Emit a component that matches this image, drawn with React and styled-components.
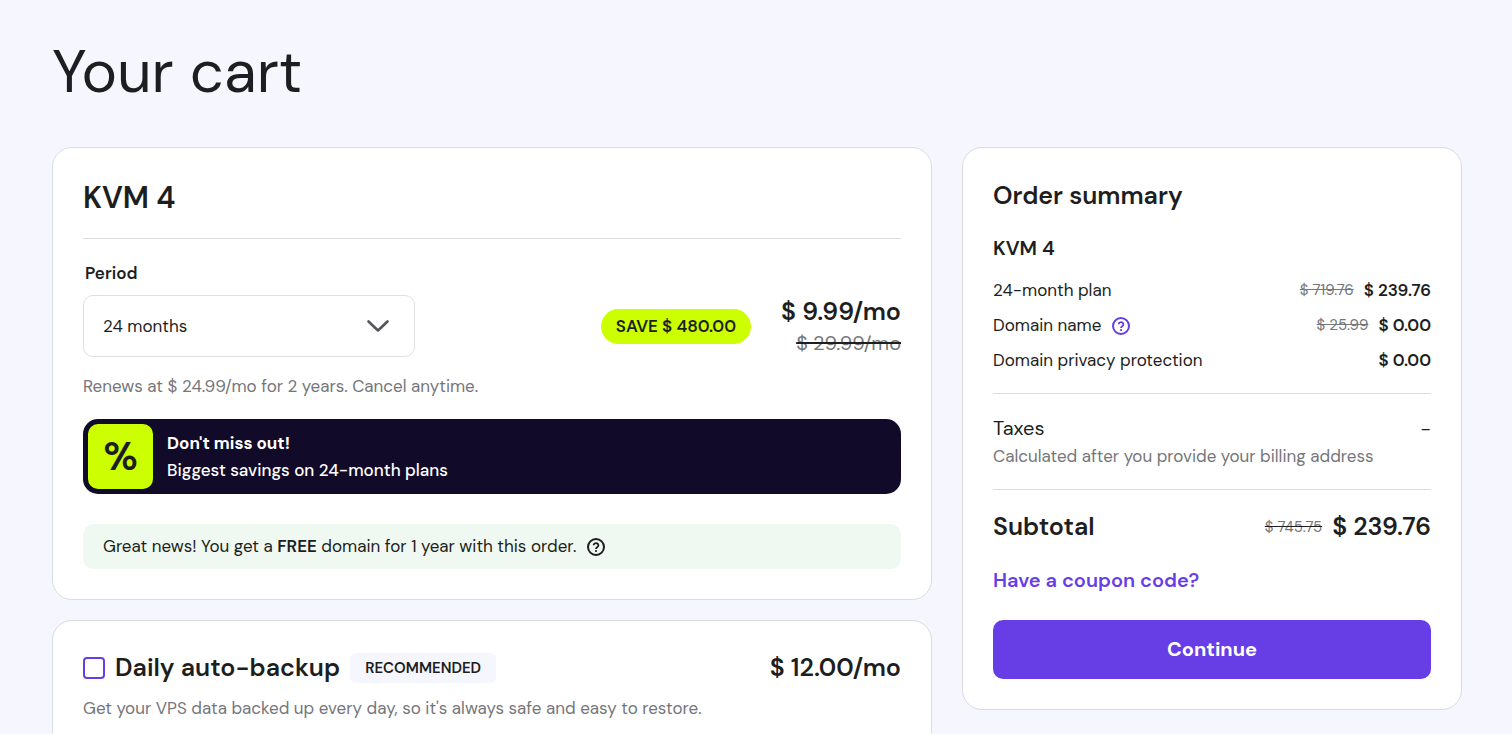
import { useState } from "react"
import styled, { createGlobalStyle } from "styled-components"

const summaryItems = [
    {name: "24-month plan", old: "$ 719.76", price: "$ 239.76"},
    {name: "Domain name", old: "$ 25.99", price: "$ 0.00", help: true},
    {name: "Domain privacy protection", price: "$ 0.00"},
]

const HelpButton = ({label, purple}) => (
    <Help type="button" aria-label={label} $purple={purple}>
        <svg width="20" height="20" viewBox="0 0 20 20" fill="none" stroke="currentColor" strokeWidth="2" aria-hidden="true">
            <circle cx="10" cy="10" r="8" />
            <path d="M7.6 8.3a2.4 2.2 0 1 1 3.8 1.8c-.8.6-1.4.9-1.4 2" strokeWidth="1.8" />
            <circle cx="10" cy="14" r="1.1" fill="currentColor" stroke="none" />
        </svg>
    </Help>
)

const App = () => {
    const [period, setPeriod] = useState("24")
    const [backup, setBackup] = useState(false)
    return (
        <>
            <GlobalStyle />
            <Page>
                <PageTitle>Your cart</PageTitle>
                <Columns>
                    <Items>
                        <Card>
                            <PlanName>KVM 4</PlanName>
                            <Label htmlFor="period">Period</Label>
                            <PeriodRow>
                                <SelectBox>
                                    <Select id="period" value={period} onChange={(e)=> setPeriod(e.target.value)}>
                                        <option value="1">1 month</option>
                                        <option value="12">12 months</option>
                                        <option value="24">24 months</option>
                                    </Select>
                                    <Chevron viewBox="0 0 24 14" aria-hidden="true">
                                        <path d="M2.5 2.5l9.5 9 9.5-9" />
                                    </Chevron>
                                </SelectBox>
                                <Save>SAVE $ 480.00</Save>
                                <Prices>
                                    <Price>$ 9.99/mo</Price>
                                    <OldPrice $size="20px" $line="#1d1e20" $height="28px">$ 29.99/mo</OldPrice>
                                </Prices>
                            </PeriodRow>
                            <Renewal>Renews at $ 24.99/mo for 2 years. Cancel anytime.</Renewal>
                            <Banner>
                                <Percent>%</Percent>
                                <div>
                                    <BannerText $bold>Don't miss out!</BannerText>
                                    <BannerText>Biggest savings on 24-month plans</BannerText>
                                </div>
                            </Banner>
                            <Notice>
                                <span>Great news! You get a <b>FREE</b> domain for 1 year with this order.</span>
                                <HelpButton label="About the free domain" />
                            </Notice>
                        </Card>
                        <Card>
                            <AddonRow>
                                <Checkbox type="checkbox" id="backup" checked={backup} onChange={()=> setBackup(!backup)} />
                                <AddonName htmlFor="backup">Daily auto-backup</AddonName>
                                <Tag>RECOMMENDED</Tag>
                                <AddonPrice>$ 12.00/mo</AddonPrice>
                            </AddonRow>
                            <Muted>Get your VPS data backed up every day, so it's always safe and easy to restore.</Muted>
                        </Card>
                    </Items>
                    <Card as="aside">
                        <SummaryTitle>Order summary</SummaryTitle>
                        <SummaryPlan>KVM 4</SummaryPlan>
                        <Lines>
                            {summaryItems.map((item)=> (
                                <Line key={item.name}>
                                    <span>{item.name}</span>
                                    {item.help && <HelpButton purple label="About the domain name" />}
                                    <Amount>
                                        {item.old && <OldPrice>{item.old}</OldPrice>}
                                        <b>{item.price}</b>
                                    </Amount>
                                </Line>
                            ))}
                        </Lines>
                        <Taxes>
                            <TaxRow><span>Taxes</span><span>-</span></TaxRow>
                            <Muted>Calculated after you provide your billing address</Muted>
                        </Taxes>
                        <Subtotal>
                            <span>Subtotal</span>
                            <Amount>
                                <OldPrice $line="#1d1e20">$ 745.75</OldPrice>
                                <span>$ 239.76</span>
                            </Amount>
                        </Subtotal>
                        <Coupon href="#coupon">Have a coupon code?</Coupon>
                        <Continue type="button">Continue</Continue>
                    </Card>
                </Columns>
            </Page>
        </>
    )
}

const GlobalStyle = createGlobalStyle`
*{
box-sizing: border-box;
}
body{
margin: 0;
background: #f6f6ff;
color: #1d1e20;
font-family: "DM Sans", Inter, sans-serif;
font-size: 17px;
line-height: 25px;
}
h1, h2, h3, p{
margin: 0;
}
b{
font-weight: 600;
}
button, select{
font: inherit;
color: inherit;
}
`

const Page = styled.main`
padding: 32px 50px 50px 52px;
`
const PageTitle = styled.h1`
font-size: 60px;
font-weight: 400;
line-height: 80px;
margin-bottom: 35px;
`
const Columns = styled.div`
display: grid;
grid-template-columns: minmax(0, 1fr) 500px;
align-items: start;
gap: 30px;
`
const Items = styled.div`
display: flex;
flex-direction: column;
gap: 20px;
`
const Card = styled.section`
background: #fff;
border: 1px solid #dadce0;
border-radius: 20px;
padding: 30px;
`
const PlanName = styled.h2`
font-size: 30px;
font-weight: 600;
line-height: 40px;
padding-bottom: 20px;
margin-bottom: 20px;
border-bottom: 1px solid #dadce0;
`
const Label = styled.label`
display: block;
padding-left: 2px;
margin-bottom: 8px;
font-weight: 600;
line-height: 28px;
`
const PeriodRow = styled.div`
display: flex;
align-items: center;
`
const SelectBox = styled.div`
display: grid;
align-items: center;
width: 332px;
margin-right: auto;
`
const Select = styled.select`
grid-area: 1 / 1;
appearance: none;
width: 100%;
height: 62px;
padding: 0 60px 0 19px;
background: #fff;
border: 1px solid #e0e0e3;
border-radius: 10px;
`
const Chevron = styled.svg`
grid-area: 1 / 1;
justify-self: end;
width: 24px;
height: 14px;
margin-right: 25px;
fill: none;
stroke: #55565c;
stroke-width: 2.6;
stroke-linecap: round;
stroke-linejoin: round;
pointer-events: none;
`
const Save = styled.span`
background: #cf0;
border-radius: 20px;
padding: 5px 15px;
margin-right: 30px;
font-weight: 600;
`
const Prices = styled.div`
display: flex;
flex-direction: column;
align-items: flex-end;
`
const Price = styled.span`
font-size: 25px;
font-weight: 600;
line-height: 34px;
`
const OldPrice = styled.del`
color: #75767a;
font-size: ${props => props.$size || "15px"};
font-weight: 400;
line-height: ${props => props.$height || "25px"};
text-decoration-color: ${props => props.$line || "#75767a"};
`
const Muted = styled.p`
color: #75767a;
line-height: 26px;
`
const Renewal = styled(Muted)`
margin: 16px 0 20px;
`
const Banner = styled.div`
display: flex;
align-items: center;
gap: 14px;
padding: 5px;
margin-bottom: 30px;
background: #110b29;
border-radius: 15px;
`
const Percent = styled.span`
display: flex;
align-items: center;
justify-content: center;
width: 65px;
height: 65px;
border-radius: 10px;
background: #cf0;
font-size: 40px;
font-weight: 600;
`
const BannerText = styled.p`
color: #fff;
line-height: 27px;
font-weight: ${props => props.$bold ? 700 : 500};
`
const Notice = styled.div`
display: flex;
align-items: center;
gap: 10px;
padding: 10px 20px;
background: #eff9f2;
border-radius: 10px;
`
const Help = styled.button`
display: flex;
padding: 0;
border: 0;
background: none;
cursor: pointer;
color: ${props => props.$purple ? "#673de6" : "#1d1e20"};
`
const AddonRow = styled.div`
display: flex;
align-items: center;
gap: 10px;
margin-bottom: 10px;
`
const Checkbox = styled.input`
appearance: none;
width: 22px;
height: 22px;
margin: 0;
border: 2px solid #673de6;
border-radius: 4px;
background: ${props => props.checked ? "#673de6" : "#fff"};
`
const AddonName = styled.label`
font-size: 25px;
font-weight: 600;
line-height: 34px;
`
const Tag = styled.span`
background: #f6f6ff;
border-radius: 6px;
padding: 0 15px;
font-size: 15px;
font-weight: 600;
line-height: 30px;
`
const AddonPrice = styled(Price)`
margin-left: auto;
`
const SummaryTitle = styled.h2`
font-size: 25px;
font-weight: 600;
line-height: 36px;
margin-bottom: 20px;
`
const SummaryPlan = styled.h3`
font-size: 20px;
font-weight: 600;
line-height: 28px;
margin-bottom: 16px;
`
const Lines = styled.div`
display: flex;
flex-direction: column;
gap: 10px;
padding-bottom: 20px;
border-bottom: 1px solid #dadce0;
`
const Line = styled.div`
display: flex;
align-items: center;
gap: 10px;
`
const Amount = styled.span`
display: flex;
align-items: center;
gap: 10px;
margin-left: auto;
`
const Taxes = styled.div`
padding: 20px 0;
border-bottom: 1px solid #dadce0;
`
const TaxRow = styled.div`
display: flex;
justify-content: space-between;
font-size: 20px;
line-height: 29px;
`
const Subtotal = styled.div`
display: flex;
padding: 20px 0;
font-size: 25px;
font-weight: 600;
line-height: 34px;
`
const Coupon = styled.a`
display: block;
margin-bottom: 24px;
color: #673de6;
font-size: 20px;
font-weight: 600;
line-height: 32px;
text-decoration: none;
`
const Continue = styled.button`
display: block;
width: 100%;
padding: 14px;
border: 0;
border-radius: 10px;
background: #673de6;
color: #fff;
font-size: 20px;
font-weight: 700;
line-height: 31px;
cursor: pointer;
`

export default App
